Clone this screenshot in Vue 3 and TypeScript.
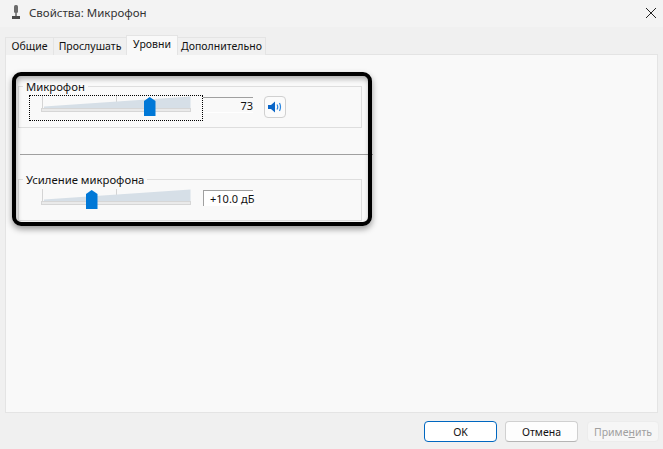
<script setup lang="ts">
const tabs = [
  { label: 'Общие', width: 49, active: false },
  { label: 'Прослушать', width: 74, active: false },
  { label: 'Уровни', width: 52, active: true },
  { label: 'Дополнительно', width: 89, active: false },
]
</script>

<template>
  <div class="window">
    <header class="titlebar">
      <svg class="mic" width="10" height="15" viewBox="0 0 10 15">
        <rect x="3" y="0" width="4" height="8" rx="1.5" fill="#6b6b6b" />
        <rect x="4" y="8" width="2" height="3" fill="#8a8a8a" />
        <rect x="1" y="11" width="8" height="3" fill="#4a4a4a" />
      </svg>
      <span class="title">Свойства: Микрофон</span>
      <svg class="close" width="10" height="10" viewBox="0 0 10 10">
        <path d="M0 0L10 10M10 0L0 10" stroke="#222" stroke-width="1" fill="none" />
      </svg>
    </header>

    <nav class="tabs">
      <div
        v-for="tab in tabs"
        :key="tab.label"
        class="tab"
        :class="{ active: tab.active }"
        :style="{ width: tab.width + 'px' }"
      >
        {{ tab.label }}
      </div>
    </nav>

    <main class="panel">
      <fieldset class="group first">
        <legend>Микрофон</legend>
        <div class="row">
          <div class="slider focused">
            <svg width="172" height="24" viewBox="0 0 172 24">
              <path d="M12.5 0V12M86.5 0V12" stroke="#d4d4d4" fill="none" />
              <polygon points="14,10.5 160.5,0.5 160.5,12 14,12" fill="#d6dfe7" />
              <rect x="11.5" y="12.5" width="149" height="3" fill="#eaeaea" stroke="#d6d6d6" />
              <polygon points="114,5 119.7,1 125.5,5 125.5,20 114,20" fill="#0078d7" />
            </svg>
          </div>
          <div class="value">73</div>
          <button class="speaker" type="button" aria-label="Звук">
            <svg width="14" height="14" viewBox="0 0 14 14">
              <polygon points="0,5 3,5 7,1.5 7,12.5 3,9 0,9" fill="#0a66c8" />
              <path d="M9 4.5Q10.5 7 9 9.5M11.5 3Q13.5 7 11.5 11" stroke="#2b86df" stroke-width="1.2" fill="none" />
            </svg>
          </button>
        </div>
      </fieldset>

      <hr class="divider" />

      <fieldset class="group">
        <legend>Усиление микрофона</legend>
        <div class="row">
          <div class="slider">
            <svg width="172" height="24" viewBox="0 0 172 24">
              <path d="M12.5 0V12M86.5 0V12" stroke="#d4d4d4" fill="none" />
              <polygon points="14,10.5 160.5,0.5 160.5,12 14,12" fill="#d6dfe7" />
              <rect x="11.5" y="12.5" width="149" height="3" fill="#eaeaea" stroke="#d6d6d6" />
              <polygon points="56,5 61.7,1 67.5,5 67.5,20 56,20" fill="#0078d7" />
            </svg>
          </div>
          <div class="value boxed">+10.0 дБ</div>
        </div>
      </fieldset>

      <div class="highlight"></div>
    </main>

    <footer class="actions">
      <button class="btn default" type="button">OK</button>
      <button class="btn" type="button">Отмена</button>
      <button class="btn disabled" type="button">Приме<u>н</u>ить</button>
    </footer>
  </div>
</template>

<style>
html,
body {
  margin: 0;
  background: #f0f0f0;
}
</style>

<style scoped>
.window {
  width: 663px;
  height: 449px;
  display: flex;
  flex-direction: column;
  background: #f0f0f0;
  font-family: "Noto Sans", "Open Sans", sans-serif;
  font-size: 10.5px;
  color: #111;
  overflow: hidden;
}
.titlebar {
  height: 27px;
  flex: none;
  display: flex;
  align-items: center;
  padding: 0 0 2px 11px;
  box-sizing: border-box;
  background: #f3f3f3;
}
.mic {
  margin-right: 8px;
}
.title {
  font-size: 11.5px;
  color: #333;
}
.close {
  margin-left: auto;
  margin-right: 7px;
}
.tabs {
  display: flex;
  align-items: flex-end;
  height: 28px;
  flex: none;
  margin-bottom: -1px;
  padding-left: 5px;
  box-sizing: border-box;
  position: relative;
  z-index: 1;
}
.tab {
  height: 18px;
  box-sizing: border-box;
  border: 1px solid #e4e4e4;
  border-bottom: 0;
  text-align: center;
  line-height: 17px;
  background: #f0f0f0;
  margin-right: -1px;
  white-space: nowrap;
}
.tab.active {
  height: 20px;
  background: #f9f9f9;
  line-height: 17px;
  position: relative;
  z-index: 1;
}
.panel {
  position: relative;
  height: 359px;
  flex: none;
  margin: 0 5px;
  box-sizing: border-box;
  border: 1px solid #e4e4e4;
  background: #f9f9f9;
}
.group {
  display: block;
  width: 344px;
  height: 50px;
  box-sizing: border-box;
  margin: 0 0 0 12px;
  padding: 0;
  border: 1px solid #dedede;
  min-width: 0;
}
.group.first {
  margin-top: 23px;
}
.group legend {
  margin-left: 4px;
  padding: 1px 3px 0;
  font-size: 11.3px;
  line-height: 16px;
}
.row {
  display: flex;
  align-items: flex-start;
  padding-left: 10px;
  margin-top: 0;
}
.slider {
  width: 174px;
  height: 26px;
  box-sizing: border-box;
  border: 1px dotted transparent;
  flex: none;
}
.slider svg {
  display: block;
}
.slider.focused {
  border-color: #000;
}
.value {
  width: 50px;
  height: 16px;
  margin-top: 2px;
  box-sizing: border-box;
  border-top: 1px solid #a0a0a0;
  border-bottom: 1px solid #fff;
  text-align: right;
  line-height: 16px;
  font-size: 11px;
  white-space: nowrap;
}
.value.boxed {
  border-left: 1px solid #a0a0a0;
  background: #fff;
  border-bottom: 0;
  text-align: left;
  padding-left: 6px;
}
.speaker {
  width: 22px;
  height: 22px;
  margin: 1px 0 0 11px;
  padding: 0;
  border: 1px solid #d0d0d0;
  border-radius: 4px;
  background: #fbfbfb;
  display: flex;
  align-items: center;
  justify-content: center;
}
.divider {
  width: 353px;
  height: 1px;
  margin: 26px 0 16px 14px;
  border: 0;
  background: #a0a0a0;
}
.highlight {
  position: absolute;
  left: 6px;
  top: 17px;
  width: 360px;
  height: 154px;
  box-sizing: border-box;
  border: 4px solid #000;
  border-radius: 9px;
  box-shadow: 0 3px 6px rgba(0, 0, 0, 0.4), inset 1px 3px 5px rgba(0, 0, 0, 0.3);
  pointer-events: none;
}
.actions {
  flex: 1;
  display: flex;
  justify-content: flex-end;
  align-items: flex-start;
  gap: 8px;
  padding: 8px 4px 0 0;
}
.btn {
  width: 73px;
  height: 21px;
  padding: 0;
  box-sizing: border-box;
  border: 1px solid #d0d0d0;
  border-bottom-color: #b5b5b5;
  border-radius: 4px;
  background: #fdfdfd;
  font: inherit;
  color: #111;
}
.btn.default {
  border: 1px solid #0067c0;
  background: #fff;
}
.btn.disabled {
  width: 72px;
  margin-left: 1px;
  border-color: #ececec;
  background: #f6f6f6;
  color: #a0a0a0;
}
</style>
